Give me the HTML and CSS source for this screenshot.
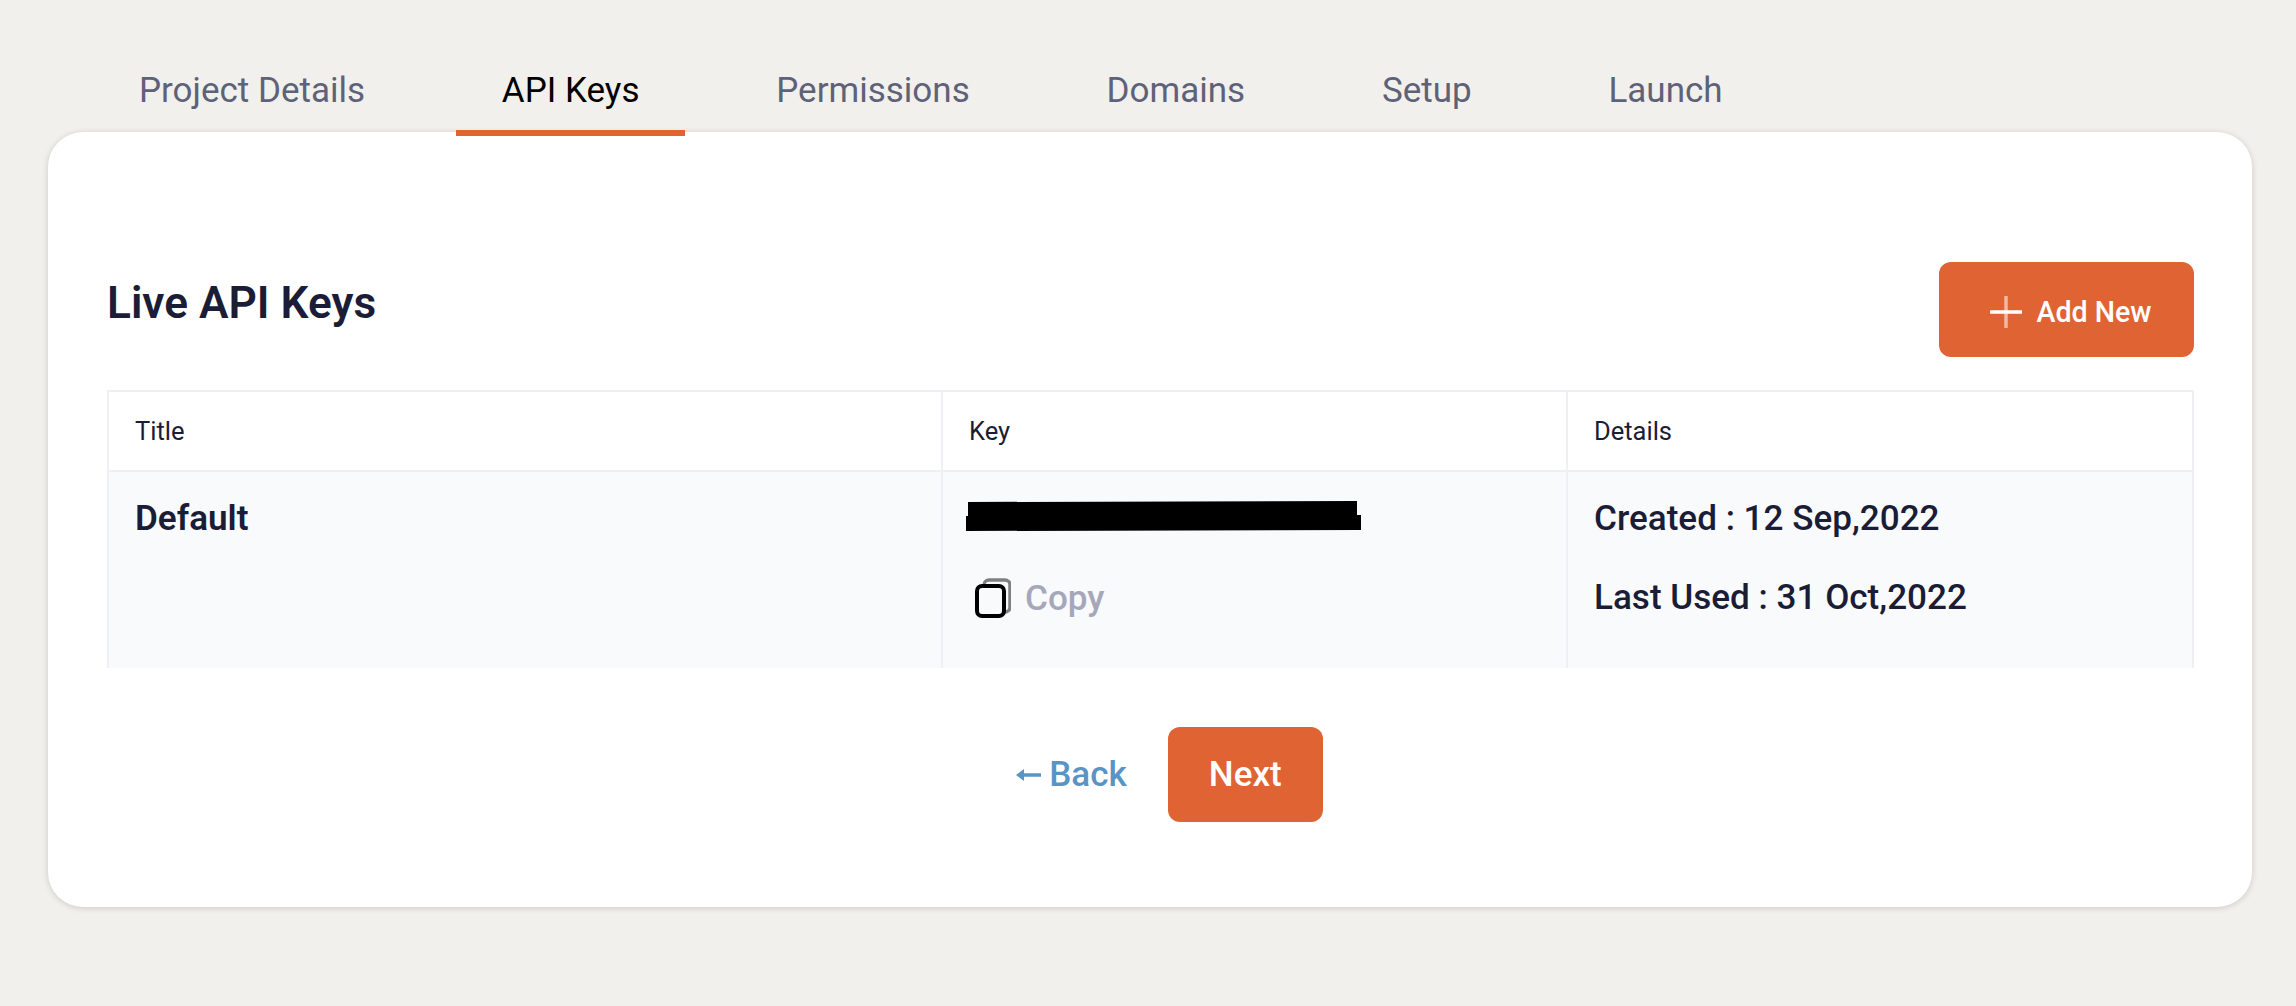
FILE: index.html
```html
<!DOCTYPE html>
<html lang="en">

<head>
  <meta charset="UTF-8">
  <meta name="viewport" content="width=device-width, initial-scale=1.0">
  <title>API Keys</title>
  <link rel="stylesheet" href="styles.css">
</head>

<body>
  <nav class="tabs">
    <a class="tab">Project Details</a>
    <a class="tab active">API Keys</a>
    <a class="tab">Permissions</a>
    <a class="tab">Domains</a>
    <a class="tab">Setup</a>
    <a class="tab">Launch</a>
  </nav>

  <main class="card">
    <div class="card-head">
      <h2 class="card-title">Live API Keys</h2>
      <button class="btn btn-add" type="button">
        <svg class="plus-icon" width="32" height="32" viewBox="0 0 32 32" aria-hidden="true">
          <path d="M16 1v30" stroke="#fff" stroke-opacity="0.55" stroke-width="3.5" stroke-linecap="round" />
          <path d="M1 16h30" stroke="#fff" stroke-width="3.5" stroke-linecap="round" />
        </svg>
        Add New
      </button>
    </div>

    <table class="keys">
      <colgroup>
        <col class="col-title">
        <col class="col-key">
        <col class="col-details">
      </colgroup>
      <thead>
        <tr>
          <th>Title</th>
          <th>Key</th>
          <th>Details</th>
        </tr>
      </thead>
      <tbody>
        <tr>
          <td class="name">Default</td>
          <td>
            <svg class="redacted" width="395" height="30" viewBox="0 0 395 30" aria-hidden="true">
              <path d="M2 1L391 0V14H395V29L1 30H0V15H2Z" fill="#000" />
            </svg>
            <a class="copy">
              <svg width="36" height="40" viewBox="0 0 36 40" aria-hidden="true">
                <rect x="9" y="2" width="26" height="32" rx="5" fill="none" stroke="#808080" stroke-width="3.5" />
                <rect x="2" y="8" width="27" height="30" rx="5" fill="#f9fafc" stroke="#000" stroke-width="4" />
              </svg>
              Copy
            </a>
          </td>
          <td class="details">
            <p>Created : 12 Sep,2022</p>
            <p>Last Used : 31 Oct,2022</p>
          </td>
        </tr>
      </tbody>
    </table>

    <div class="actions">
      <a class="back">
        <svg width="25" height="16" viewBox="0 0 25 16" aria-hidden="true">
          <path d="M25 8H7" stroke="#5a94c5" stroke-width="3.5" />
          <path d="M0 8L8 2V14Z" fill="#5a94c5" />
        </svg>
        Back
      </a>
      <button class="btn btn-next" type="button">Next</button>
    </div>
  </main>
</body>

</html>
```

FILE: styles.css
```css
body {
  margin: 0;
  min-height: 1006px;
  box-sizing: border-box;
  padding: 0 44px 0 48px;
  background-color: #f1f0ec;
  font-family: Roboto, "Liberation Sans", sans-serif;
  color: #1a1d35;
}

.tabs {
  display: flex;
  gap: 45.8px;
  padding: 69px 0 0 45.5px;
  margin-bottom: -4px;
  position: relative;
  z-index: 1;
}

.tab {
  padding: 0 45.5px 17px;
  border-bottom: 6px solid transparent;
  font-size: 35px;
  line-height: 44px;
  color: #5e6278;
}

.tab.active {
  color: #000;
  border-bottom-color: #df6333;
}

.card {
  height: 775px;
  box-sizing: border-box;
  padding: 130px 58px 0 59px;
  background-color: #fff;
  border-radius: 35px;
  box-shadow: 0 1px 6px rgba(0, 0, 0, 0.16);
}

.card-head {
  display: flex;
  justify-content: space-between;
  align-items: flex-start;
  margin-bottom: 33px;
}

.card-title {
  margin: 17px 0 0;
  font-size: 44.2px;
  line-height: 48px;
  font-weight: 600;
}

.btn {
  border: none;
  border-radius: 12px;
  background-color: #df6333;
  color: #fff;
  font-family: inherit;
  font-weight: 500;
}

.btn-add {
  display: flex;
  align-items: center;
  justify-content: center;
  gap: 14px;
  width: 255px;
  height: 95px;
  padding: 4px 0 0 9px;
  font-size: 28.6px;
}

.keys {
  width: 100%;
  table-layout: fixed;
  border-collapse: collapse;
}

.col-title {
  width: 834px;
}

.col-key {
  width: 625px;
}

.keys th,
.keys td {
  border: 2px solid #eff0f4;
  text-align: left;
  vertical-align: top;
  padding: 0 26px;
}

.keys th {
  height: 78px;
  font-size: 25.5px;
  font-weight: 400;
  vertical-align: middle;
}

.keys td {
  height: 197px;
  box-sizing: border-box;
  padding-top: 26px;
  background-color: #f9fafc;
  border-bottom: none;
  font-size: 35.1px;
  font-weight: 500;
  line-height: 40px;
}

.keys td.name {
  font-weight: 600;
}

.redacted {
  display: block;
  margin: 3px 0 0 -3px;
}

.copy {
  display: flex;
  align-items: center;
  gap: 14px;
  margin: 47px 0 0 6px;
  color: #a5a8bb;
}

.details p {
  margin: 0 0 39px;
}

.details p:last-child {
  margin-bottom: 0;
}

.actions {
  display: flex;
  justify-content: center;
  align-items: center;
  gap: 41px;
  margin-top: 59px;
  padding-left: 38px;
}

.back {
  display: flex;
  align-items: center;
  gap: 8px;
  color: #5a94c5;
  font-size: 35px;
  font-weight: 500;
}

.btn-next {
  width: 155px;
  height: 95px;
  font-size: 35px;
}
```
